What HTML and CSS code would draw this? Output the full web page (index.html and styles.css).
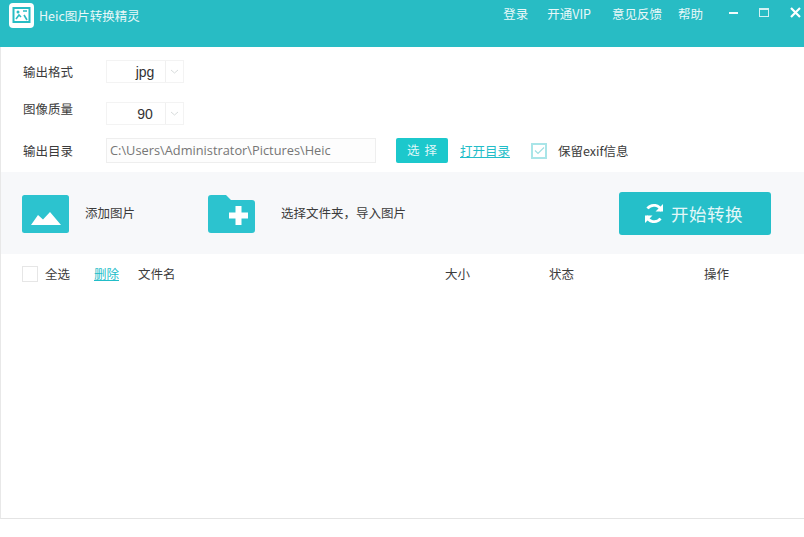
FILE: index.html
```html
<!DOCTYPE html>
<html lang="zh-CN">
<head>
<meta charset="utf-8">
<title>Heic图片转换精灵</title>
<link rel="stylesheet" href="styles.css">
</head>
<body>
<div class="app">
  <header class="titlebar">
    <div class="brand">
      <span class="logo">
        <svg width="25" height="25" viewBox="0 0 25 25"><rect width="25" height="25" rx="4" fill="#fff"/><rect x="4.5" y="5" width="16" height="14" fill="none" stroke="#28bcc4" stroke-width="2"/><path d="M7 16l3-4 2 2M14 8h4M15 12l3 5" fill="none" stroke="#28bcc4" stroke-width="1.6"/><circle cx="9" cy="9" r="1.5" fill="#28bcc4"/></svg>
      </span>
      <span class="app-name">Heic图片转换精灵</span>
    </div>
    <nav class="topnav">
      <span class="nav-login">登录</span>
      <span class="nav-vip">开通VIP</span>
      <span class="nav-feedback">意见反馈</span>
      <span class="nav-help">帮助</span>
    </nav>
    <div class="winbtns">
      <svg width="10" height="10" viewBox="0 0 10 10"><rect y="4" width="9" height="2" fill="#f2fbfb"/></svg>
      <svg width="11" height="10" viewBox="0 0 11 10"><rect x=".5" y=".5" width="9" height="8" fill="none" stroke="#d4f1f3"/><rect x=".5" y=".5" width="9" height="1.500" fill="#d4f1f3"/></svg>
      <svg width="11" height="11" viewBox="0 0 11 11"><path d="M1 1l9 9M10 1l-9 9" stroke="#fff" stroke-width="2.2"/></svg>
    </div>
  </header>

  <section class="form">
    <div class="row row-format">
      <label class="label">输出格式</label>
      <div class="select"><span class="select-value">jpg</span><span class="select-arrow"><svg width="9" height="5" viewBox="0 0 9 5"><path d="M1 1l3.5 3L8 1" fill="none" stroke="#d8dcdc"/></svg></span></div>
    </div>
    <div class="row row-quality">
      <label class="label label-raised">图像质量</label>
      <div class="select"><span class="select-value">90</span><span class="select-arrow"><svg width="9" height="5" viewBox="0 0 9 5"><path d="M1 1l3.5 3L8 1" fill="none" stroke="#d8dcdc"/></svg></span></div>
    </div>
    <div class="row row-dir">
      <label class="label">输出目录</label>
      <div class="path">C:\Users\Administrator\Pictures\Heic</div>
      <button class="btn-choose">选 择</button>
      <a class="link link-open">打开目录</a>
      <span class="check check-on"><svg width="11" height="9" viewBox="0 0 11 9"><path d="M1 4.5l3 3 6-6" fill="none" stroke="#9fdfe2" stroke-width="1.2"/></svg></span>
      <span class="exif">保留exif信息</span>
    </div>
  </section>

  <section class="toolbar">
    <div class="tool tool-add">
      <svg width="47" height="38" viewBox="0 0 47 38"><rect width="47" height="38" rx="2.5" fill="#2cc3cf"/><path d="M9 30l7-10 5 4.500 7-7.500 11 13z" fill="#fff"/></svg>
      <span>添加图片</span>
    </div>
    <div class="tool tool-folder">
      <svg width="47" height="38" viewBox="0 0 47 38"><path d="M3 0h15l5 5h21a3 3 0 0 1 3 3v27a3 3 0 0 1-3 3H3a3 3 0 0 1-3-3V3a3 3 0 0 1 3-3z" fill="#2cc3cf"/><path d="M27.500 11h6v6.500H40v6h-6.500V30h-6v-6.500H21v-6h6.500z" fill="#fff"/></svg>
      <span>选择文件夹，导入图片</span>
    </div>
    <button class="btn-start">
      <svg width="20" height="21" viewBox="0 0 20 21"><path d="M17.500 8A8 8 0 0 0 3.500 5.500M2.500 13A8 8 0 0 0 16.500 15.500" fill="none" stroke="#fff" stroke-width="2.800"/><path d="M19 1v7.500h-7.500zM1 20v-7.500h7.500z" fill="#fff"/></svg>
      <span>开始转换</span>
    </button>
  </section>

  <section class="list-head">
    <span class="check"></span>
    <span class="col-all">全选</span>
    <a class="link col-del">删除</a>
    <span class="col-name">文件名</span>
    <span class="col-size">大小</span>
    <span class="col-state">状态</span>
    <span class="col-op">操作</span>
  </section>
</div>
</body>
</html>
```
FILE: styles.css
```css
* { box-sizing: border-box; }
html, body { margin: 0; padding: 0; background: #fff; }
body {
  font-family: "Noto Sans CJK SC", "Liberation Sans", sans-serif;
  font-size: 12.500px;
  color: #3c3c3c;
}
.app {
  width: 804px;
  height: 519px;
  border-left: 1px solid #e8e8e8;
  border-bottom: 1px solid #e4e4e4;
  display: flex;
  flex-direction: column;
}
.titlebar {
  height: 47px;
  margin-left: -1px;
  background: #28bcc4;
  color: #e9f8f9;
  display: flex;
  align-items: flex-start;
  flex: none;
}
.brand { display: flex; align-items: center; margin: 3px 0 0 9px; gap: 5px; }
.logo { display: flex; width: 25px; height: 25px; }
.app-name { font-size: 12.500px; line-height: 24px; }
.topnav { display: flex; margin: 3px 0 0 auto; line-height: 22px; }
.nav-vip { margin-left: 19px; }
.nav-feedback { margin-left: 21px; }
.nav-help { margin-left: 16px; }
.winbtns { display: flex; align-items: center; gap: 20px; margin: 7px 3px 0 26px; }
.form { height: 125px; padding: 13px 0 0 22px; flex: none; }
.row { display: flex; align-items: center; }
.row-format { height: 23px; }
.row-quality { height: 23px; margin-top: 19px; }
.row-dir { height: 25px; margin-top: 13px; }
.label { width: 83px; flex: none; line-height: 22px; }
.label-raised { margin-top: -9px; }
.select { display: flex; width: 78px; height: 23px; border: 1px solid #f3f3f3; }
.select-value { flex: 1; text-align: center; font-family: "Liberation Sans", sans-serif; font-size: 14px; line-height: 22px; color: #333; padding-left: 18px; }
.select-arrow { width: 18px; display: flex; align-items: center; justify-content: center; border-left: 1px solid #f0f0f0; }
.path { width: 270px; height: 25px; border: 1px solid #eee; background: #fdfdfd; padding-left: 3px; line-height: 23px; font-family: "Open Sans", "Liberation Sans", sans-serif; font-size: 12.800px; color: #767676; white-space: nowrap; }
.btn-choose { width: 52px; height: 25px; margin-left: 20px; border: 0; border-radius: 2px; background: #1cc8cc; color: #dff7f8; font: inherit; font-size: 12.500px; word-spacing: 2px; padding: 0 0 3px; }
.link { color: #22bdc8; text-decoration: underline; }
.link-open { margin-left: 12px; }
.check { width: 16px; height: 16px; flex: none; border: 1px solid #e6e6e6; background: #fff; display: flex; align-items: center; justify-content: center; }
.check-on { margin-left: 21px; border: 2px solid #a9e5e8; }
.exif { margin-left: 11px; }
.toolbar { height: 82px; background: #f7f8fa; display: flex; align-items: center; flex: none; padding: 1px 0 0 21px; }
.tool { display: flex; align-items: center; padding-top: 1px; }
.tool span { margin-top: -3px; }
.tool-add { width: 186px; }
.tool-add span { margin-left: 16px; }
.tool-folder span { margin-left: 26px; }
.tool-folder { width: 411px; }
.btn-start {
  width: 152px;
  height: 43px;
  border: 0;
  border-radius: 3px;
  background: #25bfc9;
  color: #e3f7f8;
  font: inherit;
  font-size: 17.500px;
  letter-spacing: 0.500px;
  display: flex;
  align-items: center;
  gap: 7px;
  padding: 0 0 0 25px;
}
.list-head { display: flex; align-items: center; height: 36px; padding: 3px 0 0 21px; flex: none; }
.col-all { margin-left: 7px; width: 49px; }
.col-del { width: 44px; }
.col-name { width: 307px; }
.col-size { width: 104px; }
.col-state { width: 155px; }
```
